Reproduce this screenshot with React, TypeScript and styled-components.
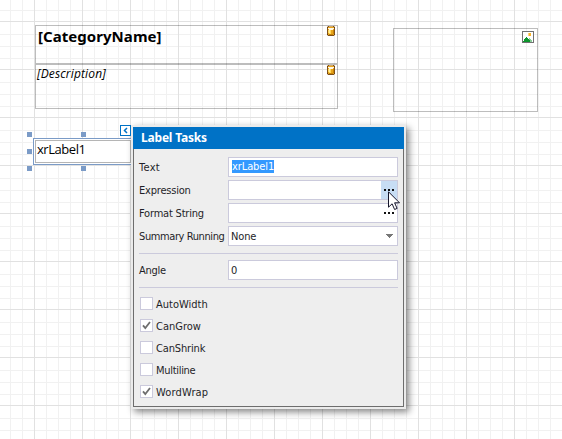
import React from 'react';
import styled, { createGlobalStyle } from 'styled-components';

const Global = createGlobalStyle`
  * { box-sizing: border-box; }
  body { margin: 0; overflow: hidden; background: #fff; }
`;

const Canvas = styled.main`
  position: relative;
  width: 562px;
  height: 439px;
  overflow: hidden;
  font-family: 'Noto Sans', 'Open Sans', sans-serif;
  color: #000;
  background: #fff;
`;

const GridLines = styled.svg`
  position: absolute;
  inset: 0;
  display: block;
`;

const Band = styled.section<{ $x: number; $y: number; $w: number; $h: number }>`
  position: absolute;
  left: ${p => p.$x}px;
  top: ${p => p.$y}px;
  width: ${p => p.$w}px;
  height: ${p => p.$h}px;
  border: 1px solid rgba(0, 0, 0, 0.26);
  display: flex;
  justify-content: space-between;
  align-items: flex-start;
`;

const CategoryText = styled.span`
  font: 700 15px/21px 'Noto Sans', sans-serif;
  letter-spacing: 0.05px;
  padding-left: 2px;
`;

const DescriptionText = styled.span`
  font: italic 400 12px/17px 'Open Sans', sans-serif;
  letter-spacing: 0.15px;
  padding-left: 1px;
`;

const BandIcon = styled.svg<{ $top?: number; $right?: number }>`
  display: block;
  flex: none;
  margin: ${p => p.$top ?? 0}px ${p => p.$right ?? 2}px 0 0;
`;

const Selection = styled.div`
  position: absolute;
  left: 33px;
  top: 138px;
  width: 100px;
  height: 27px;
  padding: 1px;
  border: 1px solid #7b9bc7;
  background: #fff;
`;

const SelectedLabel = styled.div`
  width: 96px;
  height: 23px;
  border: 1px solid #b5b5b5;
  font: 400 13px/17px 'Open Sans', sans-serif;
  letter-spacing: -0.45px;
  padding-left: 1px;
`;

const Handle = styled.i<{ $x: number; $y: number }>`
  position: absolute;
  left: ${p => p.$x}px;
  top: ${p => p.$y}px;
  width: 5px;
  height: 5px;
  background: #7b9bc7;
`;

const SmartTag = styled.button`
  position: absolute;
  left: 120px;
  top: 125px;
  width: 11px;
  height: 11px;
  padding: 0;
  border: 1px solid #0072c6;
  background: #fff;
  svg { display: block; }
`;

const Popup = styled.aside`
  position: absolute;
  left: 131px;
  top: 125px;
  width: 275px;
  height: 284px;
  padding: 2px;
  background: #ebebeb;
  box-shadow: 3px 3px 7px rgba(0, 0, 0, 0.48);
  font: 400 11px/14px 'DejaVu Sans Condensed', 'DejaVu Sans', sans-serif;
  font-stretch: condensed;
  color: #1e1e28;
`;

const Header = styled.header`
  height: 22px;
  background: #0072c6;
  color: #fff;
  font: 700 12px/22px 'Noto Sans', sans-serif;
  letter-spacing: -0.2px;
  padding-left: 8px;
`;

const Body = styled.div`
  width: 271px;
  height: 258px;
  padding: 8px 5px 0 5px;
  border: 1px solid #6d6d6d;
  border-top: 0;
  background: #eeeeee;
`;

const Fields = styled.div`
  display: grid;
  gap: 3px;
`;

const FieldRow = styled.label`
  display: grid;
  grid-template-columns: 89px 170px;
  height: 20px;
  align-items: center;
`;

const FieldName = styled.span<{ $spacing?: number }>`
  padding-top: 2px;
  letter-spacing: ${p => p.$spacing ?? 0}px;
  white-space: nowrap;
`;

const Input = styled.div`
  display: flex;
  justify-content: space-between;
  align-items: center;
  height: 20px;
  padding-left: 3px;
  border: 1px solid #cbcadc;
  background: #fff;
`;

const InputText = styled.span`
  padding-top: 2px;
  margin-left: -1px;
  letter-spacing: -0.15px;
`;

const SelectedText = styled.span`
  background: #3399ff;
  color: #fff;
  height: 13px;
  line-height: 14px;
  margin-top: -1px;
  letter-spacing: -0.1px;
`;

const EllipsisButton = styled.span<{ $hot?: boolean }>`
  display: block;
  width: 16px;
  height: 18px;
  margin-left: auto;
  background: ${p => (p.$hot ? '#c7ddf4' : 'transparent')};
  svg { display: block; }
`;

const Arrow = styled.svg`
  display: block;
  margin-right: 4px;
`;

const Divider = styled.hr<{ $gap: number }>`
  height: 1px;
  border: 0;
  margin: 7px 0 ${p => p.$gap}px;
  background: #cbcadc;
`;

const Checks = styled.div`
  display: grid;
  gap: 9px;
  padding-left: 1px;
`;

const CheckRow = styled.label`
  display: flex;
  gap: 3px;
  align-items: center;
  height: 13px;
`;

const CheckBox = styled.span`
  width: 13px;
  height: 13px;
  border: 1px solid #cbcadc;
  background: #fff;
  svg { display: block; }
`;

const Cursor = styled.svg`
  position: absolute;
  left: 388px;
  top: 191px;
`;

const steps = (first: number, max: number) => {
  const out: number[] = [];
  for (let n = first; n < max; n += 48) out.push(n);
  return out;
};

const Grid = () => (
  <GridLines width="562" height="439" shapeRendering="crispEdges">
    {[10, 22, 46].flatMap(s => steps(s, 562)).map(x => <rect key={x} x={x} y="0" width="1" height="439" fill="#f1f1f1" />)}
    {[10, 34, 46].flatMap(s => steps(s, 439)).map(y => <rect key={y} x="0" y={y} width="562" height="1" fill="#f1f1f1" />)}
    {steps(34, 562).map(x => <rect key={x} x={x} y="0" width="1" height="439" fill="#e1e1e1" />)}
    {steps(21, 439).map(y => <rect key={y} x="0" y={y} width="562" height="1" fill="#e1e1e1" />)}
  </GridLines>
);

const DatabaseIcon = () => (
  <BandIcon $right={2} width="8" height="10" shapeRendering="crispEdges">
    <path fill="#d8c7b0" d="M0 0h8v10H0z" />
    <path fill="#805018" d="M1 0h6v1h1v8H7v1H1V9H0V1h1z" />
    <path fill="#e8a51d" d="M1 1h6v8H1z" />
    <path fill="#d3a867" d="M2 0h4v1H2z" />
    <path fill="#fff8e7" d="M1 2h6v1H6v1H2V3H1z" />
    <path fill="#ffd85a" d="M1 4h3v3H1zM2 7h2v1H2z" />
    <path fill="#fff0a5" d="M2 4h1v3H2z" />
    <path fill="#c78408" d="M6 4h1v4H6zM2 8h4v1H2z" />
    <path fill="#653c12" d="M0 1h1v1H0zM7 1h1v1H7zM0 8h1v1H0zM7 8h1v1H7z" />
  </BandIcon>
);

const PictureIcon = () => (
  <BandIcon $top={2} $right={3} width="12" height="12" shapeRendering="crispEdges">
    <path fill="#727272" d="M0 0h12v12H0z" />
    <path fill="#fff" d="M1 1h10v10H1z" />
    <path fill="#f8b42c" d="M7 2h2v3H7z" />
    <path fill="#ffd37e" d="M6 2h1v3H6z" />
    <path fill="#8acc99" d="M6 8h1V7h1v1h1v1h1v2H5V8z" />
    <path fill="#0d962d" d="M1 11v-1h1V8h1V7h1V6h1v1h1v1h1v1h1v2z" />
  </BandIcon>
);

const Ellipsis = ({ hot }: { hot?: boolean }) => (
  <EllipsisButton $hot={hot}>
    <svg width="16" height="18" shapeRendering="crispEdges">
      <path fill="#111" d="M3 8h2v2H3zM7 8h2v2H7zM11 8h2v2h-2z" />
    </svg>
  </EllipsisButton>
);

const checks = [
  { name: 'AutoWidth', checked: false, spacing: 0 },
  { name: 'CanGrow', checked: true, spacing: 0 },
  { name: 'CanShrink', checked: false, spacing: -0.15 },
  { name: 'Multiline', checked: false, spacing: -0.3 },
  { name: 'WordWrap', checked: true, spacing: 0.15 },
];

export default function App() {
  return (
    <>
      <Global />
      <Canvas>
        <Grid />
        <Band $x={35} $y={25} $w={303} $h={39}>
          <CategoryText>[CategoryName]</CategoryText>
          <DatabaseIcon />
        </Band>
        <Band $x={35} $y={64} $w={303} $h={45}>
          <DescriptionText>[Description]</DescriptionText>
          <DatabaseIcon />
        </Band>
        <Band $x={393} $y={28} $w={145} $h={84}>
          <span />
          <PictureIcon />
        </Band>
        <Selection><SelectedLabel>xrLabel1</SelectedLabel></Selection>
        <Handle $x={27} $y={132} />
        <Handle $x={81} $y={132} />
        <Handle $x={27} $y={149} />
        <Handle $x={27} $y={166} />
        <Handle $x={81} $y={166} />
        <Popup>
          <Header>Label Tasks</Header>
          <Body>
            <Fields>
              <FieldRow>
                <FieldName $spacing={0.3}>Text</FieldName>
                <Input><SelectedText>xrLabel1</SelectedText></Input>
              </FieldRow>
              <FieldRow>
                <FieldName $spacing={-0.2}>Expression</FieldName>
                <Input><Ellipsis hot /></Input>
              </FieldRow>
              <FieldRow>
                <FieldName $spacing={-0.2}>Format String</FieldName>
                <Input><Ellipsis /></Input>
              </FieldRow>
              <FieldRow>
                <FieldName $spacing={-0.4}>Summary Running</FieldName>
                <Input>
                  <InputText>None</InputText>
                  <Arrow width="7" height="4" shapeRendering="crispEdges">
                    <path fill="#777" d="M0 0h7v1H6v1H5v1H4v1H3V3H2V2H1V1H0z" />
                  </Arrow>
                </Input>
              </FieldRow>
            </Fields>
            <Divider $gap={6} />
            <FieldRow>
              <FieldName $spacing={-0.3}>Angle</FieldName>
              <Input><InputText>0</InputText></Input>
            </FieldRow>
            <Divider $gap={9} />
            <Checks>
              {checks.map(c => (
                <CheckRow key={c.name}>
                  <CheckBox>
                    {c.checked && (
                      <svg width="11" height="11" fill="none" stroke="#6e6e6e" strokeWidth="1.8">
                        <path d="M2 5.3 4.3 8 9 2" />
                      </svg>
                    )}
                  </CheckBox>
                  <FieldName $spacing={c.spacing}>{c.name}</FieldName>
                </CheckRow>
              ))}
            </Checks>
          </Body>
        </Popup>
        <SmartTag aria-label="Tasks">
          <svg width="9" height="9" fill="none" stroke="#0072c6" strokeWidth="1.5">
            <path d="M6 2 3.5 4.5 6 7" />
          </svg>
        </SmartTag>
        <Cursor width="13" height="20">
          <path d="M.5.8v15.4l3.6-3.4 2.5 5.7 2.5-1.1-2.5-5.6h4.9z" fill="#fff" stroke="#15152a" strokeWidth="1" />
        </Cursor>
      </Canvas>
    </>
  );
}
